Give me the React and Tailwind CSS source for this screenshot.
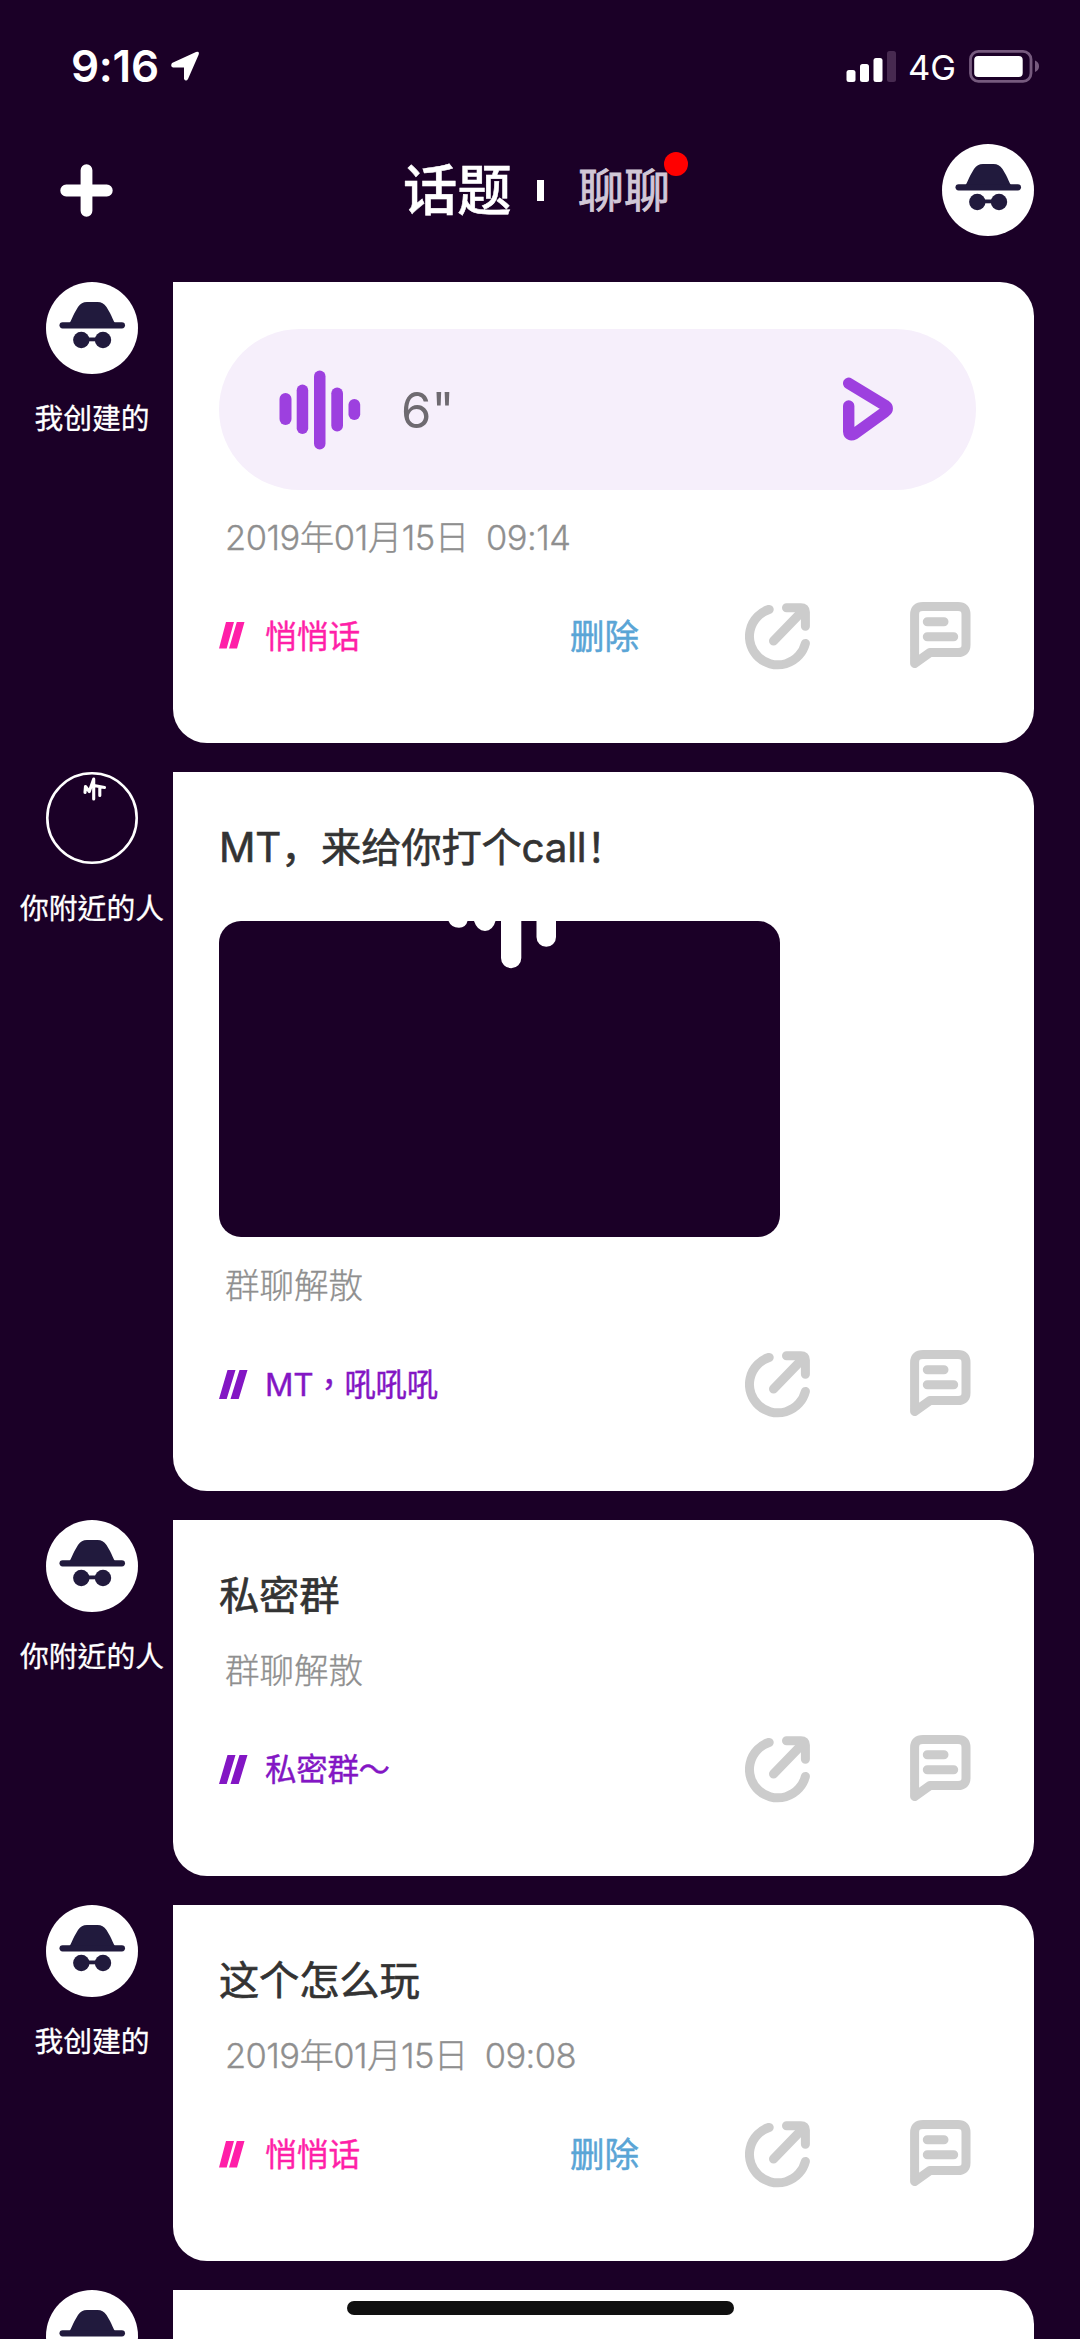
import React from "react";

const SC = "font-[Inter,'Noto_Sans_CJK_SC',sans-serif]";
const TC = "font-[Inter,'Noto_Sans_CJK_TC',sans-serif]";

function Incognito() {
  return (
    <svg viewBox="0 0 92 92" className="block size-[92px] shrink-0">
      <circle cx="46" cy="46" r="46" fill="#fff" />
      <g fill="#211a3d">
        <path d="M23 42 C25.500 38 26.500 35 28.500 31 L32 25 C34.500 21.500 37 20 41 20 H51.500 C55.500 20 58 21.500 60.500 25 L64 31 C66 35 67 38 69.500 42 Z" />
        <rect x="13.500" y="40.200" width="65.500" height="6.200" rx="3.100" />
        <circle cx="35.300" cy="58" r="8.200" />
        <circle cx="57" cy="58" r="8.200" />
        <rect x="40" y="55.500" width="12" height="3.800" />
      </g>
    </svg>
  );
}

function MtAvatar() {
  return (
    <svg viewBox="0 0 92 92" className="block size-[92px] shrink-0" fill="none" stroke="#fff">
      <circle cx="46" cy="46" r="44.700" strokeWidth="2.600" />
      <path
        d="M39 20.500 L39.500 14.500 L43.300 19.500 L47.700 7 V27 M48 13.500 L58.500 15.500 M53.800 15 V23.500"
        strokeWidth="3.100"
        strokeLinejoin="round"
        strokeLinecap="round"
      />
    </svg>
  );
}

function ShareIcon() {
  return (
    <svg viewBox="0 0 66 68" className="block h-[68px] w-[66px]" fill="none" stroke="#ccc" strokeWidth="9" strokeLinecap="round" strokeLinejoin="round">
      <path d="M24.200 7.400 A28.400 28.400 0 1 0 60.400 41.400" />
      <path d="M41.500 5.700 H56 Q60.400 5.700 60.400 10 V24.300" />
      <path d="M28.500 39 L58.500 8" />
    </svg>
  );
}

function CommentIcon() {
  return (
    <svg viewBox="0 0 61 68" className="block h-[68px] w-[61px]" fill="none" stroke="#ccc" strokeWidth="9" strokeLinecap="round" strokeLinejoin="round">
      <path d="M13 4.500 H48 Q56 4.500 56 12.500 V43 Q56 50.500 48 50.500 H20 L4.600 61.500 V12.500 Q4.600 4.500 13 4.500 Z" />
      <path d="M17.300 19.700 H34 M17.300 34.700 H43.700" />
    </svg>
  );
}

function Slashes({ kind }) {
  if (kind === "pink") {
    return (
      <svg viewBox="0 0 29 29" className="block size-[29px]" fill="#ff1fa8">
        <path d="M7 1 H15 L7.700 27.500 H0 Z M17.800 1 H25.500 L18 27.500 H10 Z" />
      </svg>
    );
  }
  return (
    <svg viewBox="0 0 29 29" className="block size-[29px]" fill="#8316c4">
      <path d="M8.500 0 H16.500 L7.700 29 H0 Z M20.500 0 H28.500 L19.700 29 H11.500 Z" />
    </svg>
  );
}

function VoicePill() {
  return (
    <div className="mt-[46.500px] flex h-[161px] w-[757px] items-center rounded-full bg-[#f6effb] pl-[60px]">
      <svg viewBox="0 0 82 80" className="mt-[2px] h-[80px] w-[82px]" fill="#9d40df">
        <rect x="0.500" y="23" width="12" height="32" rx="6" />
        <rect x="17.700" y="14.500" width="11.500" height="49.500" rx="5.750" />
        <rect x="35" y="0.500" width="11.500" height="79" rx="5.750" />
        <rect x="52.300" y="17.500" width="11.700" height="44" rx="5.800" />
        <rect x="69.500" y="29" width="11.700" height="21" rx="5.800" />
      </svg>
      <span className="mt-[3px] ml-[40px] w-[442px] text-[49px] leading-[60px] text-[#6e6a70]">6"</span>
      <svg viewBox="0 0 52 64" className="h-[64px] w-[52px]" fill="none" stroke="#9d40df" strokeWidth="11.400" strokeLinecap="round">
        <path d="M5.700 6.300 L42 28.300 Q46.500 31.300 42 34.800 L11.500 56.800 Q6 59.500 5.700 54.500 V29" strokeLinejoin="round" />
      </svg>
    </div>
  );
}

function DripImage() {
  return (
    <svg viewBox="0 0 561 316" className="mt-[44px] block h-[316px] w-[561px] rounded-[22px] bg-[#1b0027]" fill="#fff">
      <path d="M229.500 0 H248.500 Q247 6.500 240 6.700 Q232 6.500 229.500 0 Z" />
      <path d="M255 0 H276.500 Q274 9.500 266 10 Q258 9.500 255 0 Z" />
      <path d="M282 0 H302.300 V37 A10.150 10.150 0 0 1 282 37 Z" />
      <path d="M317.500 0 H337 V16 A9.750 9.750 0 0 1 317.500 16 Z" />
    </svg>
  );
}

function Post({ avatar, label, labelFont, height, title, titleFont, media, sub, subClass, tag, tagFont, kind, removable }) {
  return (
    <section className="flex items-start">
      <div className="flex w-[173px] shrink-0 flex-col items-start">
        <div className="ml-[46px]">{avatar === "mt" ? <MtAvatar /> : <Incognito />}</div>
        {label && (
          <div className={`mt-[25px] w-[184px] text-center text-[28.800px] leading-[40px] whitespace-nowrap text-white [-webkit-text-stroke:0.3px_white] ${labelFont}`}>{label}</div>
        )}
      </div>
      <div className={`flex w-[861px] shrink-0 flex-col rounded-r-[34px] rounded-bl-[34px] bg-white pl-[46px] ${height}`}>
        {title && (
          <div className={`mt-[46px] h-[59px] text-[40.300px] leading-[60px] tracking-[-0.2px] whitespace-nowrap text-[#333] [-webkit-text-stroke:0.6px_#333] ${titleFont}`}>{title}</div>
        )}
        {media}
        {sub && <div className={`h-[40px] pl-[6px] text-[34.500px] leading-[41px] font-light whitespace-nowrap text-[#8f8f8f] [-webkit-text-stroke:0.3px_#8f8f8f] ${TC} ${subClass}`}>{sub}</div>}
        {sub && (
          <div className="mt-[45px] flex h-[68px] items-center">
            <div className={`flex w-[351px] items-center gap-[17px] leading-[44px] whitespace-nowrap ${tagFont} ${kind === "pink" ? "text-[31.700px] text-[#ff1fa8] [-webkit-text-stroke:0.4px_#ff1fa8]" : "text-[31.500px] tracking-[-0.3px] text-[#8316c4] [-webkit-text-stroke:0.4px_#8316c4]"}`}>
              <Slashes kind={kind} />
              <span className="mt-[2px]">{tag}</span>
            </div>
            <div className={`mt-[2px] w-[175px] text-[34.500px] leading-[44px] text-[#5aa5d6] [-webkit-text-stroke:0.5px_#5aa5d6] ${SC}`}>{removable ? "删除" : ""}</div>
            <ShareIcon />
            <div className="ml-[99px]">
              <CommentIcon />
            </div>
          </div>
        )}
      </div>
    </section>
  );
}

function StatusBar() {
  return (
    <div className="flex h-[132px] items-center pl-[71px]">
      <span className="w-[100px] text-[44px] leading-[52px] font-semibold tracking-[-0.3px] text-white">9:16</span>
      <svg viewBox="0 0 28 30" className="h-[30px] w-[28px]" fill="#fff">
        <path d="M1 12 L25 1 Q29 0 27.500 4 L17 28 Q15 31 13 28 V16.500 H2 Q-1 15.500 1 12 Z" />
      </svg>
      <svg viewBox="0 0 50 32" className="ml-[647px] h-[32px] w-[50px]" fill="#fff">
        <rect x="0.500" y="20" width="9" height="12" rx="2.500" />
        <rect x="14" y="14" width="9" height="18" rx="2.500" />
        <rect x="27.500" y="8" width="9" height="24" rx="2.500" />
        <rect x="41" y="1" width="9" height="31" rx="2.500" fill="#472a50" />
      </svg>
      <span className="mt-[3px] ml-[12px] w-[61px] text-[34.500px] leading-[40px] text-white">4G</span>
      <svg viewBox="0 0 71 34" className="h-[34px] w-[71px]" fill="none">
        <rect x="1.500" y="2.300" width="60.500" height="30" rx="8" stroke="#765a7e" strokeWidth="2.800" />
        <rect x="5.200" y="7" width="48.500" height="21" rx="4" fill="#fff" />
        <path d="M66 11.500 Q70 13 70 17.300 Q70 21.500 66 23 Z" fill="#765a7e" />
      </svg>
    </div>
  );
}

function Header() {
  return (
    <header className="flex h-[116px] items-center pl-[60px]">
      <svg viewBox="0 0 53 53" className="size-[53px]" stroke="#fff" strokeWidth="11.800" strokeLinecap="round">
        <path d="M26.500 6.200 V46.800 M6.200 26.500 H46.800" />
      </svg>
      <h1 className={`ml-[290px] w-[134px] text-[54.300px] leading-[64px] font-medium whitespace-nowrap text-white [-webkit-text-stroke:0.5px_white] ${SC}`}>话题</h1>
      <div className="h-[21px] w-[7px] bg-white" />
      <div className={`relative ml-[34px] w-[364px] text-[46px] leading-[60px] whitespace-nowrap text-[#d1c7d6] [-webkit-text-stroke:0.8px_#d1c7d6] ${TC}`}>
        聊聊
        <span className="absolute top-[-8px] left-[86px] size-[24px] rounded-full bg-[#ff0000]" />
      </div>
      <Incognito />
    </header>
  );
}

export default function App() {
  return (
    <div className={`relative h-[2339px] w-[1080px] overflow-hidden bg-[#1b0027] ${SC}`}>
      <StatusBar />
      <Header />
      <main className="flex flex-col gap-[29px] pt-[34px]">
        <Post label="我创建的" labelFont={SC} height="h-[461px]" media={<VoicePill />} sub="2019年01月15日 09:14" subClass="mt-[27px] tracking-[-0.5px] [word-spacing:8px]" tag="悄悄话" tagFont={SC} kind="pink" removable />
        <Post avatar="mt" label="你附近的人" labelFont={TC} height="h-[719px]" title="MT，来给你打个call！" titleFont={SC} media={<DripImage />} sub="群聊解散" subClass="mt-[28px]" tag="MT，吼吼吼" tagFont={TC} kind="purple" />
        <Post label="你附近的人" labelFont={TC} height="h-[356px]" title="私密群" titleFont={TC} sub="群聊解散" subClass="mt-[25px]" tag="私密群～" tagFont={TC} kind="purple" />
        <Post label="我创建的" labelFont={SC} height="h-[356px]" title="这个怎么玩" titleFont={SC} sub="2019年01月15日 09:08" subClass="mt-[25px] tracking-[-0.6px] [word-spacing:8px]" tag="悄悄话" tagFont={SC} kind="pink" removable />
        <Post height="h-[356px]" />
      </main>
      <div className="absolute top-[2301px] left-[347px] h-[14px] w-[387px] rounded-full bg-[#101010]" />
    </div>
  );
}
